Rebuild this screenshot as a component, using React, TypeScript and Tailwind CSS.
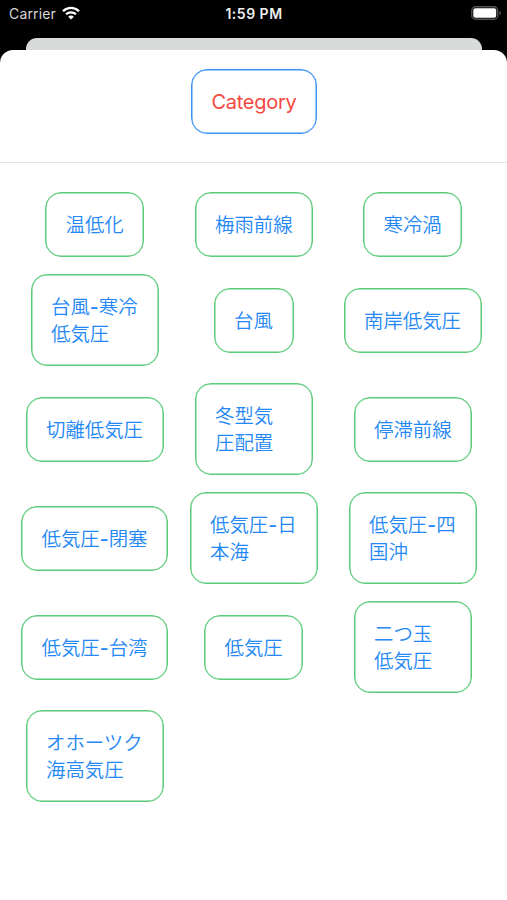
type Item = { lines: string[]; width: string };

const items: Item[] = [
  { lines: ['温低化'], width: 'w-[99px]' },
  { lines: ['梅雨前線'], width: 'w-[118px]' },
  { lines: ['寒冷渦'], width: 'w-[99px]' },
  { lines: ['台風-寒冷', '低気圧'], width: 'w-[128px]' },
  { lines: ['台風'], width: 'w-[80px]' },
  { lines: ['南岸低気圧'], width: 'w-[138px]' },
  { lines: ['切離低気圧'], width: 'w-[138px]' },
  { lines: ['冬型気', '圧配置'], width: 'w-[118px]' },
  { lines: ['停滞前線'], width: 'w-[118px]' },
  { lines: ['低気圧-閉塞'], width: 'w-[147px]' },
  { lines: ['低気圧-日', '本海'], width: 'w-[128px]' },
  { lines: ['低気圧-四', '国沖'], width: 'w-[128px]' },
  { lines: ['低気圧-台湾'], width: 'w-[147px]' },
  { lines: ['低気圧'], width: 'w-[99px]' },
  { lines: ['二つ玉', '低気圧'], width: 'w-[118px]' },
  { lines: ['オホーツク', '海高気圧'], width: 'w-[138px]' },
];

function StatusBar() {
  return (
    <div className="grid h-[38px] grid-cols-3 px-[9px] pt-[4px] text-[14px] leading-[20px]">
      <div className="flex items-start gap-[6px] text-[#d8d8d8]">
        <span className="tracking-[0.15px]">Carrier</span>
        <svg className="mt-[2px]" width="18" height="14" viewBox="0 0 18 14" fill="none">
          <path d="M1 5.2C5.5.7 12.5.7 17 5.2" stroke="#fff" strokeWidth="2.3" />
          <path d="M4 8.3c2.8-2.7 7.2-2.7 10 0" stroke="#fff" strokeWidth="2.2" />
          <path d="M9 13.6 6.1 10.7c1.6-1.5 4.2-1.5 5.8 0Z" fill="#fff" />
        </svg>
      </div>
      <div className="pl-px text-center font-semibold tracking-[0.5px] text-[#eee]">1:59 PM</div>
      <div className="flex justify-end">
        <svg className="-mr-[4px] mt-[2px]" width="31" height="14" viewBox="0 0 31 14" fill="none">
          <rect x="0.75" y="0.75" width="26" height="12.5" rx="3.8" stroke="#555" strokeWidth="1.3" />
          <rect x="2.3" y="2.3" width="22.9" height="9.4" rx="2" fill="#fff" />
          <path d="M28.3 4.7v4.6c1-.4 1.6-1.3 1.6-2.3s-.6-1.9-1.6-2.3Z" fill="#555" />
        </svg>
      </div>
    </div>
  );
}

export default function App() {
  return (
    <div className="flex h-[900px] w-full flex-col overflow-hidden bg-black font-['Inter','Noto_Sans_CJK_JP',sans-serif]">
      <StatusBar />
      <div className="mr-[25px] ml-[26px] h-[12px] shrink-0 rounded-t-[11px] bg-[#d9dada]" />
      <main className="flex-1 rounded-t-[13px] bg-white">
        <header className="flex h-[113px] justify-center border-b border-[#e5e5e5] pt-[19px] pl-px">
          <button className="h-[65px] w-[126px] rounded-[16px] border border-[#3b93f3] text-[20px] tracking-[-0.25px] text-[#f4483f] shadow-[inset_0_0_0_0.5px_#3b93f3]">
            Category
          </button>
        </header>
        <div className="mx-auto grid w-[477px] auto-rows-[92px] grid-cols-3 grid-rows-[65px] items-center justify-items-center gap-y-[17.05px] pt-[29px]">
          {items.map((item) => (
            <button
              key={item.lines.join('')}
              className={`${item.width} rounded-[16px] border border-[#5acb78] pt-[19px] pb-[17px] pl-[19.5px] text-left text-[19.4px] leading-[27px] font-[350] whitespace-nowrap text-[#2388f5] shadow-[inset_0_0_0_0.5px_#5acb78]`}
            >
              {item.lines.map((line) => (
                <span key={line} className="block">
                  {line.split(/(-)/).map((part, i) =>
                    part === '-' ? (
                      <span key={i} className="font-medium">
                        -
                      </span>
                    ) : (
                      part
                    ),
                  )}
                </span>
              ))}
            </button>
          ))}
        </div>
      </main>
    </div>
  );
}
